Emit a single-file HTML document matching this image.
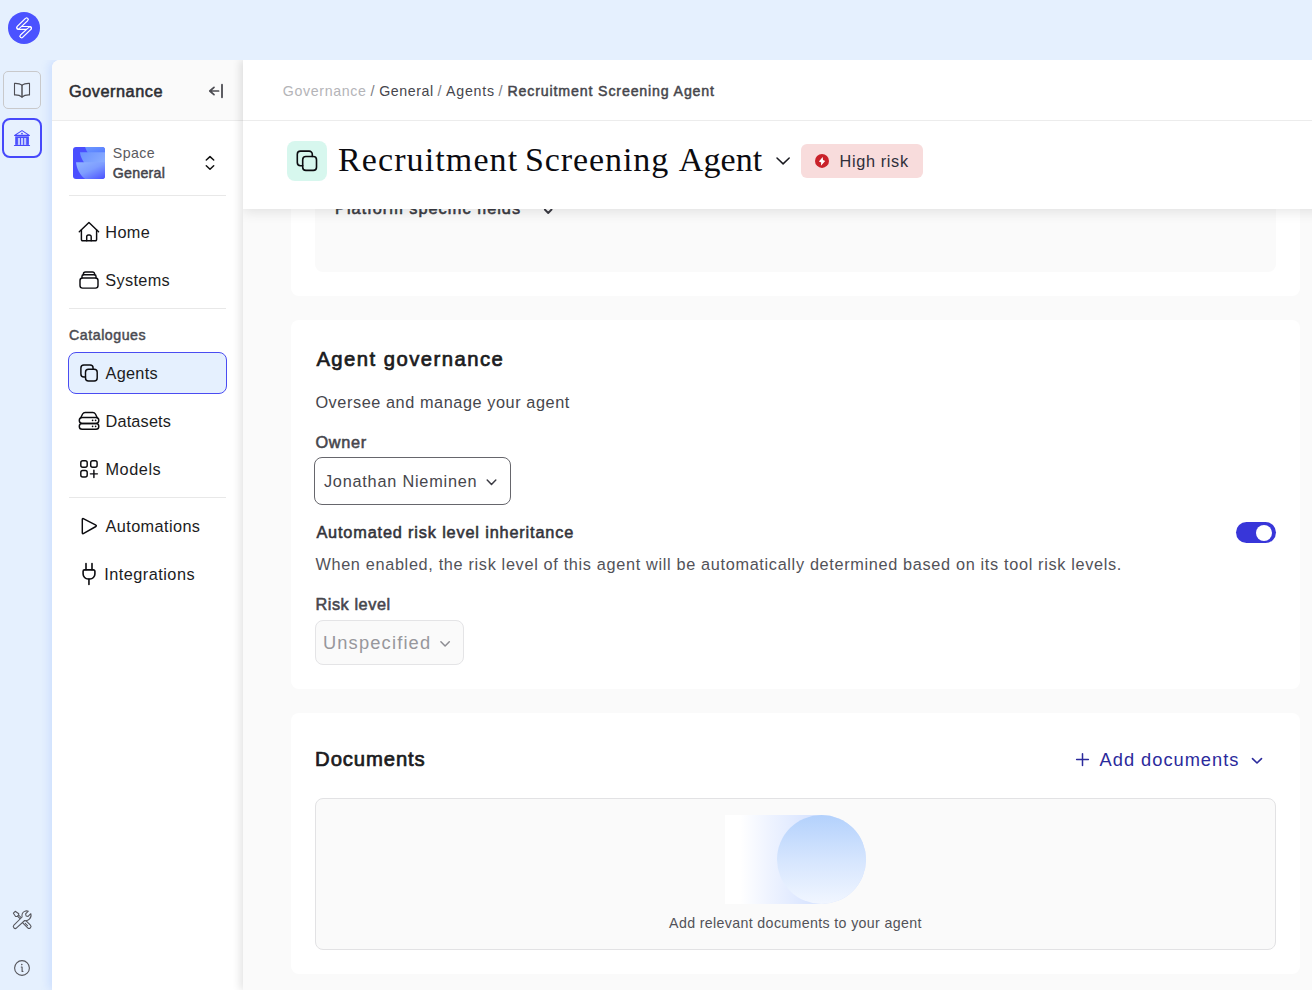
<!DOCTYPE html>
<html lang="en">
<head>
<meta charset="utf-8">
<title>Recruitment Screening Agent</title>
<style>
*{box-sizing:border-box;margin:0;padding:0}
html,body{width:1312px;height:990px;overflow:hidden}
body{background:#e5f0fe;font-family:"Liberation Sans",sans-serif;color:#1f1f23;position:relative}
.a{position:absolute}
.t{position:absolute;white-space:nowrap}
svg{display:block;position:absolute;left:0;top:0;overflow:visible}
#side{left:52px;top:60px;width:191px;height:930px;background:#fff;border-top-left-radius:8px;box-shadow:-3px 0 8px rgba(110,155,255,.20);clip-path:inset(0 0 0 -12px);z-index:1}
#sidehead{left:52px;top:60px;width:191px;height:60px;background:#fafafa;border-top-left-radius:8px;z-index:2}
.hr{position:absolute;left:69px;width:157px;height:1px;background:#e8e8e8;z-index:2}
#main{left:243px;top:60px;width:1100px;height:930px;background:#fafafa;box-shadow:-3px 0 8px rgba(0,0,0,.11);clip-path:inset(0 0 0 -14px);z-index:3}
#mhead{left:243px;top:60px;width:1100px;height:149px;background:#fff;box-shadow:0 3px 12px rgba(0,0,0,.10);clip-path:inset(0 0 -24px 0);z-index:6}
.card{position:absolute;left:291px;width:1009px;background:#fff;border-radius:8px;z-index:4}
.z5{z-index:5}.z7{z-index:7}.z2{z-index:2}
</style>
</head>
<body>
<!-- ============ RAIL ============ -->
<div class="a" style="left:3px;top:71px;width:38px;height:38px;border:1px solid #c9c9cb;border-radius:5px;background:#e7f1fe"></div>
<div class="a" style="left:2px;top:118px;width:40px;height:40px;border:2px solid #4648fb;border-radius:8px;background:#e7f1fe"></div>

<!-- ============ SIDEBAR ============ -->
<div id="side" class="a"></div>
<div id="sidehead" class="a"></div>
<div class="a z2" style="left:52px;top:120px;width:191px;height:1px;background:#ececec"></div>
<div class="hr" style="top:195px"></div>
<div class="hr" style="top:308px"></div>
<div class="hr" style="top:497px"></div>
<div class="a z2" style="left:68px;top:352px;width:159px;height:42px;border:1px solid #4a4cf2;border-radius:8px;background:#e5f0fe"></div>

<!-- ============ MAIN ============ -->
<div id="main" class="a"></div>
<div class="card" style="top:100px;height:196px"></div>
<div class="a z5" style="left:315px;top:100px;width:961px;height:172px;background:#fafafa;border-radius:8px"></div>
<div class="card" style="top:320px;height:369px"></div>
<div class="card" style="top:713px;height:261px"></div>
<!-- owner select -->
<div class="a z5" style="left:314px;top:457px;width:197px;height:48px;border:1px solid #66666c;border-radius:8px;background:#fff"></div>
<!-- toggle -->
<div class="a z5" style="left:1236px;top:522px;width:40px;height:21px;border-radius:11px;background:#3836d9"></div>
<div class="a z5" style="left:1256px;top:525px;width:16px;height:16px;border-radius:8px;background:#fff"></div>
<!-- risk select -->
<div class="a z5" style="left:315px;top:620px;width:149px;height:45px;border:1px solid #e4e4e6;border-radius:8px;background:#fafafa"></div>
<!-- documents box -->
<div class="a z5" style="left:315px;top:798px;width:961px;height:152px;border:1px solid #e2e2e4;border-radius:8px;background:#fafafa"></div>
<div class="a z5" style="left:725px;top:815px;width:141px;height:89px;border-radius:0 44.5px 44.5px 0;background:linear-gradient(90deg,#fff 0%,#fff 11%,#eef3ff 32%,#dbe6ff 58%,#cfdeff 100%)"></div>
<div class="a z5" style="left:777px;top:815px;width:89px;height:89px;border-radius:50%;background:linear-gradient(180deg,#b3d1fc 0%,#d5e5fe 50%,#f1f6ff 100%)"></div>

<!-- header -->
<div id="mhead" class="a"></div>
<div class="a z7" style="left:243px;top:120px;width:1069px;height:1px;background:#ececec"></div>
<div class="a z7" style="left:287px;top:141px;width:40px;height:40px;border-radius:8px;background:#d7f7ee"></div>
<div class="a z7" style="left:801px;top:144px;width:122px;height:34px;border-radius:6px;background:#f8dcdc"></div>

<div class="t" id="sgov" style="left:69.00px;top:81.00px;font-size:16.3px;line-height:20px;color:#2d2d33;z-index:7;-webkit-text-stroke:0.55px #2d2d33;letter-spacing:0.533px;">Governance</div>
<div class="t" id="space" style="left:112.80px;top:144.10px;font-size:14.2px;line-height:18px;color:#5a5a60;z-index:7;letter-spacing:0.400px;">Space</div>
<div class="t" id="general" style="left:112.80px;top:163.60px;font-size:14.2px;line-height:18px;color:#45454b;z-index:7;-webkit-text-stroke:0.48px #45454b;letter-spacing:0.267px;">General</div>
<div class="t" id="home" style="left:105.20px;top:221.70px;font-size:16.3px;line-height:20px;color:#1c1c22;z-index:7;letter-spacing:0.433px;">Home</div>
<div class="t" id="systems" style="left:105.20px;top:269.70px;font-size:16.3px;line-height:20px;color:#1c1c22;z-index:7;letter-spacing:0.350px;">Systems</div>
<div class="t" id="cat" style="left:69.10px;top:325.90px;font-size:14.2px;line-height:18px;color:#4b4b52;z-index:7;-webkit-text-stroke:0.48px #4b4b52;letter-spacing:0.522px;">Catalogues</div>
<div class="t" id="agents" style="left:105.50px;top:362.70px;font-size:16.3px;line-height:20px;color:#1c1c22;z-index:7;letter-spacing:0.300px;">Agents</div>
<div class="t" id="datasets" style="left:105.50px;top:410.70px;font-size:16.3px;line-height:20px;color:#1c1c22;z-index:7;letter-spacing:0.171px;">Datasets</div>
<div class="t" id="models" style="left:105.50px;top:458.80px;font-size:16.3px;line-height:20px;color:#1c1c22;z-index:7;letter-spacing:0.540px;">Models</div>
<div class="t" id="autom" style="left:105.50px;top:515.80px;font-size:16.3px;line-height:20px;color:#1c1c22;z-index:7;letter-spacing:0.400px;">Automations</div>
<div class="t" id="integ" style="left:104.20px;top:563.60px;font-size:16.3px;line-height:20px;color:#1c1c22;z-index:7;letter-spacing:0.482px;">Integrations</div>
<div class="t" id="bc1" style="left:282.80px;top:82.30px;font-size:14.2px;line-height:18px;color:#b4b4b8;z-index:7;letter-spacing:0.656px;">Governance</div>
<div class="t" id="bc2" style="left:370.50px;top:82.30px;font-size:14.6px;line-height:18px;color:#7c7c82;z-index:7;">/</div>
<div class="t" id="bc3" style="left:379.20px;top:82.30px;font-size:14.2px;line-height:18px;color:#46464c;z-index:7;letter-spacing:0.567px;">General</div>
<div class="t" id="bc4" style="left:437.50px;top:82.30px;font-size:14.6px;line-height:18px;color:#7c7c82;z-index:7;">/</div>
<div class="t" id="bc5" style="left:445.90px;top:82.30px;font-size:14.2px;line-height:18px;color:#46464c;z-index:7;letter-spacing:0.820px;">Agents</div>
<div class="t" id="bc6" style="left:498.50px;top:82.30px;font-size:14.6px;line-height:18px;color:#7c7c82;z-index:7;">/</div>
<div class="t" id="bc7" style="left:507.50px;top:82.30px;font-size:14.2px;line-height:18px;color:#46464c;z-index:7;-webkit-text-stroke:0.48px #46464c;letter-spacing:0.846px;">Recruitment Screening Agent</div>
<div class="t" id="title1" style="left:338.00px;top:138.60px;font-size:34px;line-height:42px;color:#0b0b10;z-index:7;letter-spacing:1.110px;font-family:'Liberation Serif',serif;">Recruitment</div>
<div class="t" id="title2" style="left:525.00px;top:138.60px;font-size:34px;line-height:42px;color:#0b0b10;z-index:7;letter-spacing:0.900px;font-family:'Liberation Serif',serif;">Screening</div>
<div class="t" id="title3" style="left:678.80px;top:138.60px;font-size:34px;line-height:42px;color:#0b0b10;z-index:7;letter-spacing:0.100px;font-family:'Liberation Serif',serif;">Agent</div>
<div class="t" id="hrisk" style="left:839.60px;top:151.00px;font-size:16.3px;line-height:20px;color:#2f2f3a;z-index:7;letter-spacing:0.637px;">High risk</div>
<div class="t" id="plat" style="left:335.10px;top:197.90px;font-size:16.3px;line-height:20px;color:#3a3a42;z-index:5;-webkit-text-stroke:0.55px #3a3a42;letter-spacing:1.000px;">Platform specific fields</div>
<div class="t" id="aggov" style="left:316.40px;top:347.10px;font-size:20.3px;line-height:25px;color:#1b1b20;z-index:5;-webkit-text-stroke:0.69px #1b1b20;letter-spacing:1.453px;">Agent governance</div>
<div class="t" id="oversee" style="left:315.40px;top:391.60px;font-size:16.3px;line-height:20px;color:#46464c;z-index:5;letter-spacing:0.568px;">Oversee and manage your agent</div>
<div class="t" id="owner" style="left:315.40px;top:431.80px;font-size:16.3px;line-height:20px;color:#46464c;z-index:5;-webkit-text-stroke:0.55px #46464c;letter-spacing:0.725px;">Owner</div>
<div class="t" id="jon" style="left:323.90px;top:471.10px;font-size:16.3px;line-height:20px;color:#46464c;z-index:5;letter-spacing:0.781px;">Jonathan Nieminen</div>
<div class="t" id="auto" style="left:316.40px;top:521.80px;font-size:16.3px;line-height:20px;color:#33333a;z-index:5;-webkit-text-stroke:0.55px #33333a;letter-spacing:0.842px;">Automated risk level inheritance</div>
<div class="t" id="when" style="left:315.40px;top:554.20px;font-size:16.3px;line-height:20px;color:#525258;z-index:5;letter-spacing:0.660px;">When enabled, the risk level of this agent will be automatically determined based on its tool risk levels.</div>
<div class="t" id="risk" style="left:315.40px;top:593.80px;font-size:16.3px;line-height:20px;color:#46464c;z-index:5;-webkit-text-stroke:0.55px #46464c;letter-spacing:0.567px;">Risk level</div>
<div class="t" id="unspec" style="left:322.90px;top:630.80px;font-size:18.3px;line-height:23px;color:#97979c;z-index:5;letter-spacing:1.170px;">Unspecified</div>
<div class="t" id="docs" style="left:315.10px;top:746.90px;font-size:20.3px;line-height:25px;color:#1b1b20;z-index:5;-webkit-text-stroke:0.69px #1b1b20;letter-spacing:0.887px;">Documents</div>
<div class="t" id="adddoc" style="left:1099.60px;top:747.90px;font-size:18.3px;line-height:23px;color:#2b2a9c;z-index:5;letter-spacing:0.975px;">Add documents</div>
<div class="t" id="addrel" style="left:669.10px;top:914.00px;font-size:14.2px;line-height:18px;color:#525258;z-index:5;letter-spacing:0.360px;">Add relevant documents to your agent</div>

<svg class="z5" width="1312" height="990" viewBox="0 0 1312 990" fill="none" stroke-linecap="round" stroke-linejoin="round">
  <!-- platform specific fields chevron (clipped by header) -->
  <path d="M544.8,209.5 L548.2,213 L551.6,209.5" stroke="#3a3a42" stroke-width="1.8"/>
  <!-- owner select chevron -->
  <path d="M487.2,480 L491.5,484.4 L495.8,480" stroke="#3c3c44" stroke-width="1.5"/>
  <!-- risk select chevron -->
  <path d="M440.9,641.8 L445.1,646 L449.3,641.8" stroke="#8c8c92" stroke-width="1.5"/>
  <!-- add documents plus -->
  <path d="M1076.6,759.6 H1088.4 M1082.5,753.7 V765.5" stroke="#2b2a9c" stroke-width="1.5"/>
  <!-- add documents chevron -->
  <path d="M1252.5,758.6 L1257,763 L1261.5,758.6" stroke="#2b2a9c" stroke-width="1.6"/>
</svg>
<svg class="z7" width="1312" height="990" viewBox="0 0 1312 990" fill="none" stroke-linecap="round" stroke-linejoin="round">
  <defs>
    <linearGradient id="g1" x1="0" y1="0" x2="1" y2="1"><stop offset="0" stop-color="#6f9bff"/><stop offset="1" stop-color="#557bff"/></linearGradient>
    <linearGradient id="g2" x1="0" y1="0" x2="1" y2="0.4"><stop offset="0" stop-color="#6a92ff"/><stop offset="1" stop-color="#86a9ff"/></linearGradient>
    <linearGradient id="g3" x1="0.1" y1="0" x2="0.9" y2="1"><stop offset="0" stop-color="#8fb2ff"/><stop offset="0.45" stop-color="#7d9cff"/><stop offset="1" stop-color="#4a50ff"/></linearGradient>
    <clipPath id="avc"><rect x="73" y="147" width="32" height="32" rx="3"/></clipPath>
  </defs>
  <!-- logo -->
  <circle cx="24" cy="27.9" r="16" fill="#4b52ff"/>
  <g stroke-width="4" stroke="#fff">
    <path d="M18.2,27.9 H30"/><path d="M18.4,27.4 L26.6,19.5"/><path d="M21.5,36.2 L29.8,28.4"/>
  </g>
  <g stroke-width="1.9" stroke="#4b52ff">
    <path d="M18.2,27.9 H30"/>
  </g>
  <g stroke-width="4" stroke="#fff"><path d="M18.4,27.4 L26.6,19.5"/><path d="M21.5,36.2 L29.8,28.4"/></g>
  <g stroke-width="1.9" stroke="#4b52ff"><path d="M18.4,27.4 L26.6,19.5"/><path d="M21.5,36.2 L29.8,28.4"/></g>
  <!-- book -->
  <g stroke="#4f4f55" stroke-width="1.1">
    <path d="M22,85.2 C20,83.5 17.2,83.3 14.5,83.4 V94.9 C17.2,94.8 20,95.2 22,97 C24,95.2 26.8,94.8 29.5,94.9 V83.4 C26.8,83.3 24,83.5 22,85.2 Z"/>
    <path d="M22,85.2 V97" stroke-width="1.5"/>
  </g>
  <!-- bank -->
  <g>
    <path d="M22,130.6 L14.6,135.4 H29.4 Z" stroke="#4648fb" stroke-width="1.1"/>
    <circle cx="22" cy="133.6" r="0.9" fill="#4648fb"/>
    <rect x="15.2" y="136.3" width="13.7" height="8.6" fill="#4b50fd"/>
    <rect x="17.9" y="138" width="2.1" height="6.9" fill="#c3ccff"/>
    <rect x="21" y="138" width="2.1" height="6.9" fill="#c3ccff"/>
    <rect x="24.1" y="138" width="2.1" height="6.9" fill="#c3ccff"/>
    <path d="M14.5,145.5 H29.5" stroke="#4648fb" stroke-width="1.2"/>
  </g>
  <!-- tools -->
  <g stroke="#55555b" stroke-width="1.05">
    <path d="M15.2,911.3 L18.8,913.8 L18.4,915.3 L17.3,916.4 L15.6,916.5 L13.4,913.2 Z"/>
    <path d="M17.5,916.1 L21.3,919.9 M18.6,915 L22.4,918.8"/>
    <path d="M22.2,922.3 L24.9,919.6 L30.4,925.1 A1.9,1.9 0 0 1 27.7,927.8 Z"/>
    <path d="M25.2,923.3 L27.5,925.6"/>
    <path d="M13.9,925.2 L22.1,917 C21.6,914.6 22.6,912.4 24.6,911.4 C25.8,910.8 27.2,910.8 28.3,911.2 L25.6,913.9 L26.1,915.9 L28.1,916.4 L30.8,913.7 C31.4,915.6 30.9,917.8 29.4,919.2 C28,920.5 26.3,920.9 24.7,920.5 L16.6,927.9 A1.9,1.9 0 0 1 13.9,925.2 Z" fill="#e5f0fe"/>
  </g>
  <!-- info -->
  <circle cx="22" cy="968" r="7.4" stroke="#55555b" stroke-width="1.1"/>
  <path d="M21.3,967 H22.1 V971.4 H22.9" stroke="#55555b" stroke-width="1.1"/>
  <circle cx="21.8" cy="964.6" r="0.8" fill="#55555b"/>
  <!-- collapse -->
  <path d="M214,87.3 L209.8,91 L214,94.7 M209.8,91 H218.6" stroke="#4c4c52" stroke-width="1.7"/>
  <path d="M222,84.6 V97.3" stroke="#55555b" stroke-width="1.9"/>
  <!-- space avatar -->
  <g clip-path="url(#avc)">
    <rect x="73" y="147" width="32" height="32" fill="#4a4fff"/>
    <path d="M84.8,146 H106 V153 H88 C86.5,151 85.4,148.5 84.8,146 Z" fill="url(#g1)"/>
    <path d="M79.9,152.3 H106 V163 H84.4 C82,160 80.5,156.5 79.9,152.3 Z" fill="url(#g2)"/>
    <path d="M76,162.3 H106 V180 H86.5 C80.5,176 76.8,170 76,162.3 Z" fill="url(#g3)"/>
  </g>
  <!-- caret up/down -->
  <path d="M206.3,160 L210,156.6 L213.7,160 M206.3,165.7 L210,169.2 L213.7,165.7" stroke="#111" stroke-width="1.5"/>
  <!-- nav icons -->
  <g stroke="#0c0c10" stroke-width="1.45">
    <!-- home -->
    <path d="M79.3,231.8 L88.95,222.6 L98.6,231.8"/>
    <path d="M81.4,230 V239.6 A1.2,1.2 0 0 0 82.6,240.8 H95.4 A1.2,1.2 0 0 0 96.6,239.6 V230"/>
    <path d="M86.7,240.8 V236.8 A1.8,1.8 0 0 1 88.5,235 H89.4 A1.8,1.8 0 0 1 91.2,236.8 V240.8"/>
    <!-- systems -->
    <rect x="80" y="278" width="18" height="10.1" rx="2.6"/>
    <path d="M82,277.8 V276.3 A1.5,1.5 0 0 1 83.5,274.8 H94.5 A1.5,1.5 0 0 1 96,276.3 V277.8"/>
    <path d="M83.4,274.8 V274 A2.1,2.1 0 0 1 85.5,271.9 H92.5 A2.1,2.1 0 0 1 94.6,274 V274.8"/>
    <!-- agents -->
    <rect x="85.5" y="369.2" width="11.7" height="11.8" rx="3"/>
    <path d="M85.5,377 H83.9 A3,3 0 0 1 80.9,374 V367.9 A3,3 0 0 1 83.9,364.9 H90.1 A3,3 0 0 1 93.1,367.9 V369.2"/>
    <!-- datasets -->
    <rect x="79.3" y="417.4" width="19.5" height="6" rx="2.8"/>
    <rect x="79.3" y="423.4" width="19.5" height="5.9" rx="2.8"/>
    <path d="M80.6,418 L82.6,414 A3,3 0 0 1 85.2,412.5 H92.8 A3,3 0 0 1 95.4,414 L97.4,418"/>
    <!-- models -->
    <rect x="80.8" y="460.7" width="6.4" height="6.5" rx="2"/>
    <rect x="90.7" y="460.7" width="6.4" height="6.5" rx="2"/>
    <rect x="80.8" y="470.5" width="6.4" height="6.5" rx="2"/>
    <path d="M90.4,473.85 H97.4 M93.9,470.3 V477.4"/>
    <!-- automations -->
    <path d="M82.3,519.2 V533 A0.7,0.7 0 0 0 83.3,533.6 L95.9,526.5 A0.7,0.7 0 0 0 95.9,525.2 L83.3,518.6 A0.7,0.7 0 0 0 82.3,519.2 Z"/>
    <!-- integrations -->
    <path d="M86,563.6 V569.8 M92,563.6 V569.8 M88.95,579 V584.4" stroke-width="1.6"/>
    <path d="M84.6,569.85 H93.4 A1.5,1.5 0 0 1 94.9,571.35 V574 A5,5 0 0 1 89.9,579 H88.1 A5,5 0 0 1 83.1,574 V571.35 A1.5,1.5 0 0 1 84.6,569.85 Z" stroke-width="1.6"/>
  </g>
  <g fill="#0c0c10"><circle cx="92.6" cy="420.3" r="0.85"/><circle cx="95.6" cy="420.3" r="0.85"/><circle cx="92.6" cy="426.3" r="0.85"/><circle cx="95.6" cy="426.3" r="0.85"/></g>
  <!-- title icon -->
  <g stroke="#0c0c10" stroke-width="1.6">
    <rect x="302.7" y="156.5" width="13.8" height="13.9" rx="3.2"/>
    <path d="M302.7,165.8 H300.5 A3.2,3.2 0 0 1 297.3,162.6 V154.3 A3.2,3.2 0 0 1 300.5,151.1 H309.1 A3.2,3.2 0 0 1 312.3,154.3 V156.5"/>
  </g>
  <!-- title chevron -->
  <path d="M777,158 L783.1,163.9 L789.2,158" stroke="#1a1a20" stroke-width="1.5"/>
  <!-- risk icon -->
  <circle cx="822" cy="160.9" r="7" fill="#c9222a"/>
  <path d="M822.7,157 L818.9,161.6 L821.2,162.4 L820.9,165.7 L825.2,161 L823,160.1 Z" fill="#fff"/>
</svg>

</body>
</html>
